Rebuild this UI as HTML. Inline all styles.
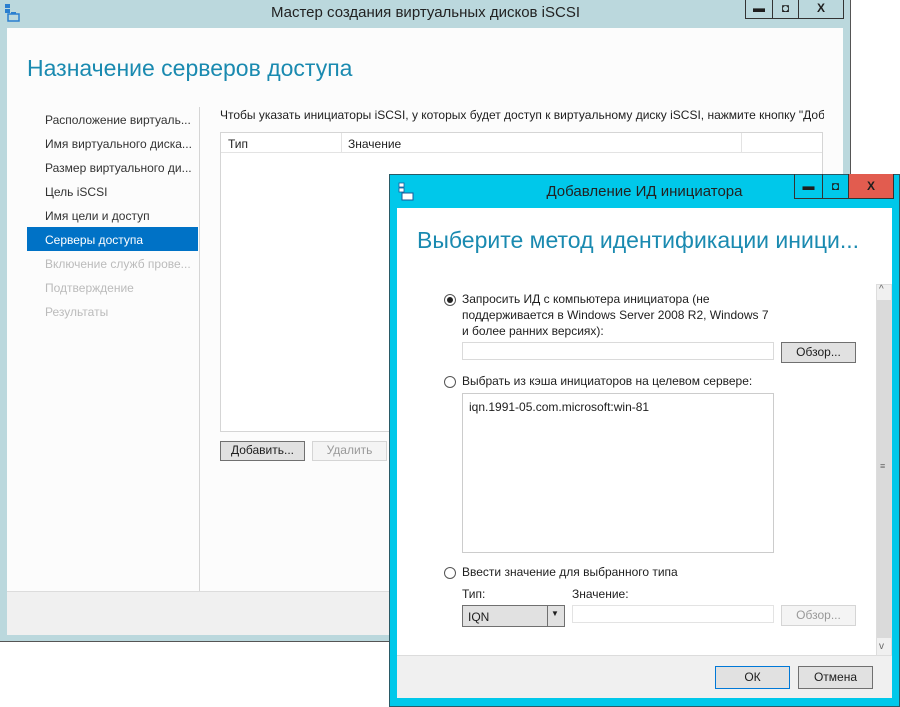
<!DOCTYPE html>
<html><head><meta charset="utf-8"><style>
*{box-sizing:border-box;margin:0;padding:0}
body{width:900px;height:707px;background:#fff;position:relative;overflow:hidden;font-family:"Liberation Sans","DejaVu Sans",sans-serif;font-size:12px;color:#1e1e1e}
.a{position:absolute}
.t{white-space:nowrap}
.btn{position:absolute;background:#e1e1e1;border:1px solid #adadad;text-align:center;font-size:12px;line-height:17px}
.wb{position:absolute;top:0;height:19px;border:1px solid #333;border-top:none;text-align:center;font-weight:bold;font-size:12px;line-height:17px}
.radio{position:absolute;width:12px;height:12px;border:1px solid #555;border-radius:50%;background:#fff}
</style></head><body>
<div class="a" style="left:0;top:0;width:851px;height:642px;background:#bbd8dd;border-right:1px solid #555;border-bottom:1px solid #555"></div>
<svg class="a" style="left:4px;top:3px" width="18" height="20"><rect x="1" y="1" width="5" height="4" fill="#2a7fd0"/><rect x="1" y="6" width="5" height="4" fill="#2a7fd0"/><rect x="4" y="11" width="11" height="7" fill="none" stroke="#2a7fd0" stroke-width="1.5"/><rect x="7" y="9" width="5" height="2" fill="#2a7fd0"/></svg>
<div class="a t" style="left:0;width:851px;top:4px;text-align:center;font-size:15px;color:#222">Мастер создания виртуальных дисков iSCSI</div>
<div class="wb" style="left:745px;width:28px">▬</div>
<div class="wb" style="left:772px;width:27px">◘</div>
<div class="wb" style="left:798px;width:46px">X</div>
<div class="a" style="left:7px;top:28px;width:836px;height:607px;background:#fcfcfc"></div>
<div class="a" style="left:7px;top:591px;width:836px;height:44px;background:#f0f0f0;border-top:1px solid #dcdcdc"></div>
<div class="a t" style="left:27px;top:55px;font-size:23px;color:#1a8ab0">Назначение серверов доступа</div>
<div class="a" style="left:199px;top:107px;width:1px;height:484px;background:#d5d5d5"></div>
<div class="a" style="left:27px;top:227px;width:171px;height:24px;background:#0072c6"></div>
<div class="a t" style="left:45px;top:108px;font-size:12px;line-height:24px;color:#333">Расположение виртуаль...<br>Имя виртуального диска...<br>Размер виртуального ди...<br>Цель iSCSI<br>Имя цели и доступ<br><span style="color:#fff">Серверы доступа</span><br><span style="color:#bbb">Включение служб прове...<br>Подтверждение<br>Результаты</span></div>
<div class="a t" style="left:220px;top:108px;font-size:12px;width:604px;overflow:hidden">Чтобы указать инициаторы iSCSI, у которых будет доступ к виртуальному диску iSCSI, нажмите кнопку "Добавить".</div>
<div class="a" style="left:220px;top:132px;width:603px;height:300px;background:#fff;border:1px solid #d5d5d5"></div>
<div class="a" style="left:221px;top:133px;width:601px;height:20px;border-bottom:1px solid #e3e3e3"></div>
<div class="a" style="left:341px;top:133px;width:1px;height:20px;background:#e3e3e3"></div>
<div class="a" style="left:741px;top:133px;width:1px;height:20px;background:#e3e3e3"></div>
<div class="a t" style="left:228px;top:137px">Тип</div>
<div class="a t" style="left:348px;top:137px">Значение</div>
<div class="btn" style="left:220px;top:441px;width:85px;height:20px;border-color:#707070">Добавить...</div>
<div class="btn" style="left:312px;top:441px;width:75px;height:20px;background:#f4f4f4;border-color:#d5d5d5;color:#999">Удалить</div>
<div class="a" style="left:389px;top:174px;width:511px;height:533px;background:#00c8ea;border:1px solid #2a5a66"></div>
<svg class="a" style="left:398px;top:182px" width="18" height="20"><rect x="1" y="1" width="5" height="4" fill="#fff" stroke="#1a5a9a" stroke-width=".8"/><rect x="1" y="6" width="5" height="4" fill="#fff" stroke="#1a5a9a" stroke-width=".8"/><rect x="4" y="11" width="11" height="7" fill="#fff" stroke="#1a5a9a" stroke-width="1"/></svg>
<div class="a t" style="left:389px;width:511px;top:183px;text-align:center;font-size:15px;color:#222">Добавление ИД инициатора</div>
<div class="wb" style="left:794px;top:174px;width:29px;height:25px;line-height:24px">▬</div>
<div class="wb" style="left:822px;top:174px;width:27px;height:25px;line-height:24px">◘</div>
<div class="wb" style="left:848px;top:174px;width:46px;height:25px;line-height:24px;background:#e25c4f">X</div>
<div class="a" style="left:397px;top:208px;width:495px;height:490px;background:#fff"></div>
<div class="a" style="left:397px;top:655px;width:495px;height:43px;background:#f0f0f0;border-top:1px solid #dcdcdc"></div>
<div class="a t" style="left:417px;top:227px;font-size:23px;color:#1a8ab0">Выберите метод идентификации иници...</div>
<div class="a" style="left:876px;top:284px;width:16px;height:372px;background:#f0f0f0;border:1px solid #ddd"></div>
<div class="a" style="left:877px;top:300px;width:14px;height:338px;background:#dadada"></div>
<div class="a t" style="left:879px;top:284px;font-size:10px;color:#666">^</div>
<div class="a t" style="left:879px;top:641px;font-size:10px;color:#666">v</div>
<div class="a t" style="left:880px;top:461px;font-size:9px;color:#666">≡</div>
<div class="radio" style="left:444px;top:294px"></div><div class="a" style="left:447px;top:297px;width:6px;height:6px;border-radius:50%;background:#222"></div>
<div class="a t" style="left:462px;top:291px;line-height:16px">Запросить ИД с компьютера инициатора (не<br>поддерживается в Windows Server 2008 R2, Windows 7<br>и более ранних версиях):</div>
<div class="a" style="left:462px;top:342px;width:312px;height:18px;border:1px solid #dadada"></div>
<div class="btn" style="left:781px;top:342px;width:75px;height:21px;border-color:#707070;line-height:19px">Обзор...</div>
<div class="radio" style="left:444px;top:376px"></div>
<div class="a t" style="left:462px;top:374px">Выбрать из кэша инициаторов на целевом сервере:</div>
<div class="a" style="left:462px;top:393px;width:312px;height:160px;border:1px solid #ccc"></div>
<div class="a t" style="left:469px;top:400px">iqn.1991-05.com.microsoft:win-81</div>
<div class="radio" style="left:444px;top:567px"></div>
<div class="a t" style="left:462px;top:565px">Ввести значение для выбранного типа</div>
<div class="a t" style="left:462px;top:587px">Тип:</div>
<div class="a t" style="left:572px;top:587px">Значение:</div>
<div class="a" style="left:462px;top:605px;width:103px;height:22px;background:#e1e1e1;border:1px solid #707070"></div>
<div class="a" style="left:547px;top:606px;width:1px;height:20px;background:#707070"></div>
<div class="a t" style="left:468px;top:610px">IQN</div>
<div class="a t" style="left:551px;top:609px;font-size:8px">▼</div>
<div class="a" style="left:572px;top:605px;width:202px;height:18px;border:1px solid #e3e3e3"></div>
<div class="btn" style="left:781px;top:605px;width:75px;height:21px;background:#f4f4f4;border-color:#d5d5d5;color:#999;line-height:19px">Обзор...</div>
<div class="btn" style="left:715px;top:666px;width:75px;height:23px;border-color:#0078d7;line-height:21px">ОК</div>
<div class="btn" style="left:798px;top:666px;width:75px;height:23px;border-color:#707070;line-height:21px">Отмена</div>
</body></html>
